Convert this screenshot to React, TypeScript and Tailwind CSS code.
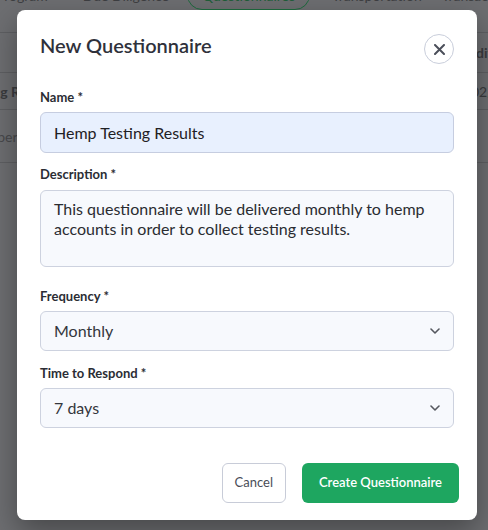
import React from 'react';

const font = { fontFamily: 'Lato, "Open Sans", sans-serif' };

// Hintergrundseite (unter dem Overlay)
const BackgroundPage: React.FC = () => (
  <div className="absolute inset-0 bg-[#6d6e71]">
    <div className="-mt-[40px] h-[73px] pt-[20px] border-b border-[#5e5f62] flex items-start text-[14px] text-[#3e3f42] whitespace-nowrap">
      <span className="h-[30px] flex items-center -ml-[4px]">Program</span>
      <span className="h-[30px] flex items-center ml-[35px]">Due Diligence</span>
      <span className="h-[30px] ml-[18px] px-[14px] flex items-center rounded-full border border-[#1f6b3f] text-[#1f5f39]">Questionnaires</span>
      <span className="h-[30px] flex items-center ml-[22px]">Transportation</span>
      <span className="h-[30px] flex items-center ml-[20px]">Transactions</span>
    </div>
    <div className="h-[40px] border-b border-[#5e5f62] flex items-center text-[14px] font-bold text-[#3a3b3e] whitespace-nowrap">
      <span className="ml-[451px]">Conditions</span>
    </div>
    <div className="h-[37px] border-b border-[#5e5f62] flex items-center text-[14px] text-[#3a3b3e] whitespace-nowrap">
      <span className="-ml-[37px] font-bold">Testing Results</span>
      <span className="ml-[415px]">02/14/24</span>
    </div>
    <div className="h-[53px] border-b border-[#5e5f62] flex items-center text-[14px] text-[#48494c] whitespace-nowrap">
      <span className="-ml-[18px]">Paper</span>
    </div>
  </div>
);

const Chevron: React.FC = () => (
  <svg width="10" height="6" viewBox="0 0 10 6" fill="none">
    <path d="M1 1l4 4 4-4" stroke="#55585f" strokeWidth="1.6" strokeLinecap="round" strokeLinejoin="round" />
  </svg>
);

const Label: React.FC<{ children: React.ReactNode }> = ({ children }) => (
  <div className="text-[13px] leading-[18px] font-bold text-[#2b2d34]">{children}</div>
);

const SelectBox: React.FC<{ value: string }> = ({ value }) => (
  <div className="mt-[6px] h-[40px] rounded-[6px] border border-[#cdd2df] bg-[#f7f9fd] pl-[13px] pr-[13px] flex items-center justify-between">
    <span className="text-[16px] text-[#34363c]">{value}</span>
    <Chevron />
  </div>
);

const App: React.FC = () => {
  return (
    <div className="relative w-[488px] h-[530px] overflow-hidden" style={font}>
      <BackgroundPage />

      <div className="absolute left-[17px] top-[10px] w-[460px] h-[510px] rounded-[8px] bg-white shadow-[0_12px_30px_rgba(0,0,0,0.35)] flex flex-col">
        <div className="px-[23px]">
          <div className="pt-[21px] flex items-start justify-between">
            <h2 className="text-[20px] leading-[28px] font-semibold text-[#2f313b]">New Questionnaire</h2>
            <button className="mt-[3px] w-[30px] h-[30px] rounded-full border border-[#c9cedb] flex items-center justify-center">
              <svg width="11" height="11" viewBox="0 0 11 11" fill="none">
                <path d="M1 1l9 9M10 1l-9 9" stroke="#4b4f5a" strokeWidth="2" strokeLinecap="round" />
              </svg>
            </button>
          </div>

          <div className="mt-[24px]">
            <Label>Name *</Label>
            <div className="mt-[6px] h-[41px] rounded-[6px] border border-[#c6cde0] bg-[#e8f0fe] pl-[13px] flex items-center text-[16px] text-[#1f2024]">
              Hemp Testing Results
            </div>
          </div>

          <div className="mt-[12px]">
            <Label>Description *</Label>
            <div className="mt-[7px] h-[77px] rounded-[6px] border border-[#cdd2df] bg-[#f7f9fd] pl-[13px] pr-[13px] pt-[8px] text-[16px] leading-[20px] text-[#2a2c31]">
              This questionnaire will be delivered monthly to hemp accounts in order to collect testing results.
            </div>
          </div>

          <div className="mt-[20px]">
            <Label>Frequency *</Label>
            <SelectBox value="Monthly" />
          </div>

          <div className="mt-[13px]">
            <Label>Time to Respond *</Label>
            <SelectBox value="7 days" />
          </div>
        </div>

        <div className="mt-auto pb-[17px] pr-[18px] flex justify-end gap-[16px]">
          <button className="h-[40px] px-[12px] rounded-[6px] border border-[#c8ccd8] bg-white text-[13px] text-[#4a4d57]">
            Cancel
          </button>
          <button className="h-[40px] px-[17px] rounded-[6px] bg-[#1ea660] text-[13px] font-semibold text-white">
            Create Questionnaire
          </button>
        </div>
      </div>
    </div>
  );
};

export default App;
